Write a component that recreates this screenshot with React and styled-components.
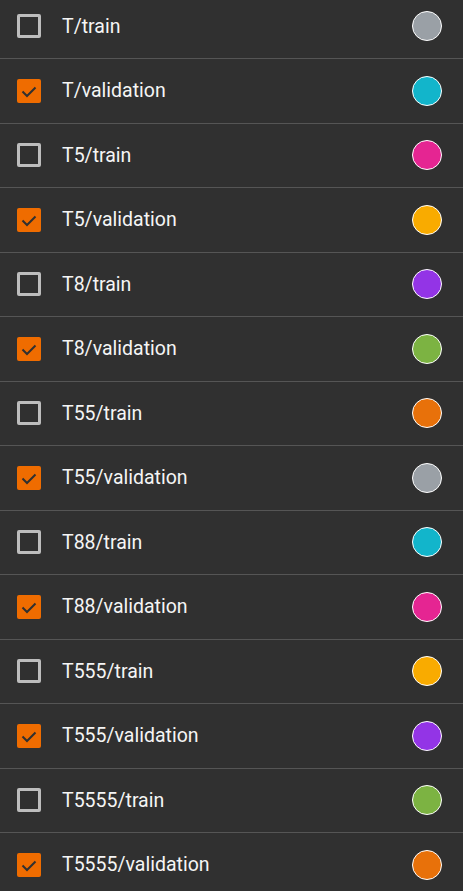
import React from "react";
import styled, { createGlobalStyle } from "styled-components";

const GlobalStyle = createGlobalStyle`
  html, body {
    margin: 0;
    padding: 0;
    background: #303030;
    overflow: hidden;
  }
  body {
    font-family: Roboto, "Noto Sans", sans-serif;
  }
`;

const palette = ["#9aa0a6", "#12b5cb", "#e52592", "#f9ab00", "#9334e6", "#7cb342", "#e8710a"];

const runs = ["T", "T5", "T8", "T55", "T88", "T555", "T5555"].flatMap((name) => [
  `${name}/train`,
  `${name}/validation`,
]);

const List = styled.div`
  display: flex;
  flex-direction: column;
  margin-top: -5.5px;
  background: #303030;
`;

const Row = styled.label`
  display: flex;
  align-items: center;
  box-sizing: border-box;
  height: 64.5px;
  padding: 0 21px 0 17px;
  border-bottom: 1px solid #555555;
  cursor: pointer;
`;

const Box = styled.span`
  flex-shrink: 0;
  box-sizing: border-box;
  width: 24px;
  height: 24px;
  border-radius: 2px;
  display: inline-flex;
  align-items: center;
  justify-content: center;
  border: ${({ $checked }) => ($checked ? "none" : "3px solid #bdbdbd")};
  background: ${({ $checked }) => ($checked ? "#ef6c00" : "transparent")};
`;

const Name = styled.span`
  flex: 1;
  margin-left: 21px;
  font-size: 19.5px;
  color: #f5f5f5;
  white-space: nowrap;
`;

const Swatch = styled.span`
  flex-shrink: 0;
  width: 30px;
  height: 30px;
  box-sizing: border-box;
  border-radius: 50%;
  border: 1px solid #ffffff;
  background: ${({ $color }) => $color};
`;

const Check = () => (
  <svg width="24" height="24" viewBox="0 0 24 24" aria-hidden="true">
    <path d="M5.5 12.5 L10 17 L18.5 8.5" fill="none" stroke="#303030" strokeWidth="2" />
  </svg>
);

const App = () => {
  return (
    <>
      <GlobalStyle />
      <List>
        {runs.map((run, i) => {
          const checked = i % 2 === 1;
          return (
            <Row key={run}>
              <Box $checked={checked}>{checked && <Check />}</Box>
              <Name>{run}</Name>
              <Swatch $color={palette[i % palette.length]} />
            </Row>
          );
        })}
      </List>
    </>
  );
};

export default App;
